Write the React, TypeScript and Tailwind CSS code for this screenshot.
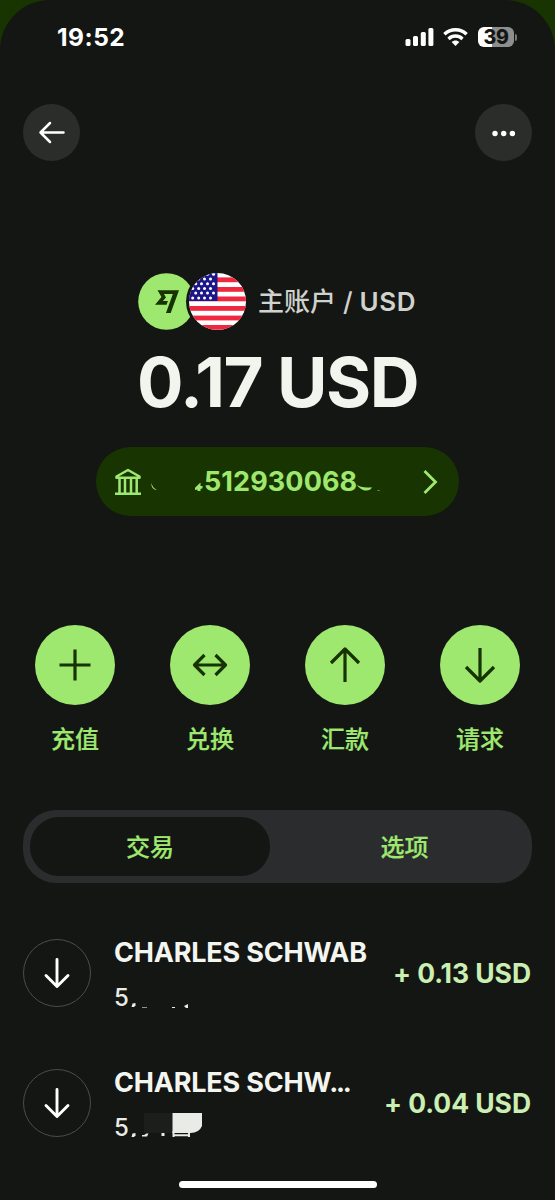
import type React from "react"

interface ActionProps {
    label: string
    children: React.ReactNode
}

interface TransactionProps {
    name: string
    truncated?: boolean
    amount: string
    children: React.ReactNode
}

const starRows = [
    { y: 1.3, xs: [12.5, 18.5, 24.5] },
    { y: 6, xs: [9.7, 15.5, 21.5] },
    { y: 10.7, xs: [6.7, 12.5, 18.5, 24.5] },
    { y: 15.4, xs: [3.7, 9.7, 15.5, 21.5] },
    { y: 20.1, xs: [6.7, 12.5, 18.5, 24.5] },
    { y: 24.9, xs: [3.7, 9.7, 15.5, 21.5] },
]

const stripes = [-5, 4.4, 14, 23.5, 33, 42.6, 52]

const StatusBar = () => (
    <div className="flex h-[74px] shrink-0 items-center justify-between pl-[57px] pr-[38px]">
        <span className="text-[24.5px] font-bold leading-none tracking-[0.5px] text-white">19:52</span>
        <div className="flex items-center">
            <svg width="29" height="18" viewBox="0 0 29 18" fill="#fff">
                <rect x="0.5" y="11" width="5" height="7" rx="1.5" />
                <rect x="8" y="8" width="5" height="10" rx="1.5" />
                <rect x="15.8" y="4" width="5" height="14" rx="1.5" />
                <rect x="23.4" y="0" width="5" height="18" rx="1.5" />
            </svg>
            <svg className="ml-[9px]" width="25" height="18" viewBox="0 0 25 18" fill="none" stroke="#fff" strokeWidth="3.4">
                <path d="M1.4 6.2C7.6 0.3 17.4 0.3 23.6 6.2" />
                <path d="M5.5 10.9C9.6 7.1 15.4 7.1 19.5 10.9" />
                <path d="M12.5 18L8.6 14.1C10.8 11.9 14.2 11.9 16.4 14.1Z" fill="#fff" stroke="none" />
            </svg>
            <div className="ml-[10px] flex h-5 w-9 items-center justify-center rounded-[6px] bg-[linear-gradient(90deg,#fff_39%,#8d8e8d_39%)]">
                <span className="pt-px text-[19.5px] font-extrabold leading-none tracking-[-0.3px] text-[#141613]">39</span>
            </div>
            <div className="ml-[1px] h-[7px] w-[2px] rounded-r-full bg-[#777977]" />
        </div>
    </div>
)

const BrandBadge = () => (
    <svg width="57" height="57" viewBox="0 0 57 57">
        <circle cx="28.5" cy="28.5" r="28.3" fill="#9fe870" />
        <path
            transform="translate(17 16.6)"
            d="M6.488 7.469 0 15.05h11.585l1.301-3.576H7.922l3.033-3.507.01-.092L8.993 4.48h8.873l-6.878 18.925h4.706L24 .595H2.543l3.945 6.874Z"
            fill="#163300"
        />
    </svg>
)

const UsFlag = () => (
    <svg width="57" height="57" viewBox="0 0 57 57">
        <clipPath id="flag">
            <circle cx="28.5" cy="28.5" r="28.5" />
        </clipPath>
        <g clipPath="url(#flag)">
            <rect width="57" height="57" fill="#fff" />
            {stripes.map((y) => (
                <rect key={y} y={y} width="57" height="4.8" fill="#f0283f" />
            ))}
            <rect width="28.5" height="28" fill="#1b1788" />
            {starRows.map((row) =>
                row.xs.map((x) => <circle key={`${row.y}-${x}`} cx={x} cy={row.y} r="1.5" fill="#fff" />)
            )}
        </g>
    </svg>
)

const Action: React.FC<ActionProps> = ({ label, children }) => (
    <button className="flex w-20 flex-col items-center">
        <span className="flex size-20 items-center justify-center rounded-full bg-[#9fe870]">
            <svg width="40" height="40" viewBox="0 0 40 40" fill="none" stroke="#163300" strokeWidth="3.2" strokeLinejoin="round">
                {children}
            </svg>
        </span>
        <span className="mt-[19px] text-[24px] font-medium leading-8 text-[#9fe870] [-webkit-text-stroke:0.2px_#9fe870]">{label}</span>
    </button>
)

const Transaction: React.FC<TransactionProps> = ({ name, truncated, amount, children }) => (
    <div className="flex h-[68px] items-start">
        <div className="flex size-[68px] items-center justify-center rounded-full border-[1.5px] border-[#4b4d4a]">
            <svg width="28" height="32" viewBox="0 0 28 32" fill="none" stroke="#fff" strokeWidth="2.9" strokeLinecap="round" strokeLinejoin="round">
                <path d="M14 2.5V29.5M3 18.5L14 29.5L25 18.5" />
            </svg>
        </div>
        <div className="ml-[23px] flex-1">
            <div className="mt-px whitespace-nowrap text-[27px] font-bold leading-[26px] tracking-[-0.2px] text-[#f3f5f1]">
                {name}
                {truncated && <span className="-ml-[2px] tracking-[-2.3px]">...</span>}
            </div>
            <div className="mt-4 flex h-[32px] items-start">
                <span className="text-[24px] font-medium leading-[32px] text-[#e8ebe6]">5</span>
                {children}
            </div>
        </div>
        <div className="mt-[17px] whitespace-nowrap text-[26.5px] font-bold leading-[34px] tracking-[-0.05px] text-[#cbefb2]">{amount}</div>
    </div>
)

export default function App() {
    return (
        <div className="h-[1200px] w-[555px] overflow-hidden bg-[#183400] font-['Inter','Noto_Sans_CJK_SC',sans-serif]">
            <div className="flex h-full flex-col rounded-t-[50px] bg-[#141613]">
                <StatusBar />

                <div className="mt-[30px] flex shrink-0 justify-between px-[23px]">
                    <button className="flex size-[57px] items-center justify-center rounded-full bg-[#2b2d2a]" aria-label="返回">
                        <svg width="28" height="24" viewBox="0 0 28 24" fill="none" stroke="#fff" strokeWidth="2.5" strokeLinecap="round" strokeLinejoin="round">
                            <path d="M25.5 11.5H2.5M12 2L2.5 11.5L12 21" />
                        </svg>
                    </button>
                    <button className="flex size-[57px] items-center justify-center rounded-full bg-[#2b2d2a]" aria-label="更多">
                        <svg width="24" height="8" viewBox="0 0 24 8" fill="#fff">
                            <circle cx="3" cy="4.5" r="2.7" />
                            <circle cx="11.7" cy="4.5" r="2.7" />
                            <circle cx="20.4" cy="4.5" r="2.7" />
                        </svg>
                    </button>
                </div>

                <div className="mt-[109px] flex shrink-0 items-center pl-[138px]">
                    <BrandBadge />
                    <div className="-ml-[9px] rounded-full bg-[#141613] p-[3px]">
                        <UsFlag />
                    </div>
                    <span className="ml-[9px] whitespace-nowrap text-[26px] font-medium text-[#d0d2ce]">
                        主账户 / <span className="font-semibold tracking-[0.6px]">USD</span>
                    </span>
                </div>

                <div className="mt-[8px] shrink-0 whitespace-nowrap text-center text-[69px] font-bold leading-[82px] tracking-[-1.5px] text-[#f1f5ee]">
                    0.17 USD
                </div>

                <button className="ml-[96px] mt-[24px] flex h-[69px] w-[363px] shrink-0 items-center rounded-full bg-[#183400] pl-[18px] pr-[20px] text-[#9fe870]">
                    <svg width="28" height="28" viewBox="0 0 28 28" fill="none" stroke="currentColor" strokeWidth="2.5" strokeLinejoin="round">
                        <path d="M2.5 8.5L14 2L25.5 8.5V9.7H2.5ZM5.5 10V25M11 10V25M17 10V25M22.7 10V25M1 25.7H27" />
                    </svg>
                    <svg className="ml-[8px]" width="54" height="24" viewBox="0 0 54 24" fill="currentColor">
                        <path d="M1.6 13C2 16.5 4 18.5 7 20C3.5 20 0.8 17 1.6 13Z" />
                        <path d="M45 17.8L50.5 12.5V16H52.5V18.3L50.5 19V21H47.5V19.5L45 20Z" />
                    </svg>
                    <span className="text-[27px] font-bold leading-none tracking-[0.1px]">512930068</span>
                    <svg width="24" height="24" viewBox="0 0 24 24" fill="currentColor">
                        <path d="M0 14.8C3 17 7.8 18.2 14.8 17.2C13.5 22 4 22 0 14.8Z" />
                        <rect x="20.5" y="20" width="2" height="1" opacity="0.6" />
                    </svg>
                    <svg className="ml-auto" width="18" height="26" viewBox="0 0 18 26" fill="none" stroke="currentColor" strokeWidth="2.8">
                        <path d="M3.5 2L14.5 13L3.5 24" />
                    </svg>
                </button>

                <div className="mt-[109px] flex shrink-0 justify-between px-[35px]">
                    <Action label="充值">
                        <path d="M20 4.5V35.5M4.5 20H35.5" />
                    </Action>
                    <Action label="兑换">
                        <path d="M4 20H36M14.5 10L4.5 20L14.5 30M25.5 10L35.5 20L25.5 30" />
                    </Action>
                    <Action label="汇款">
                        <path d="M20 37V4M6 18L20 4L34 18" />
                    </Action>
                    <Action label="请求">
                        <path d="M20 3V36M6 22L20 36L34 22" />
                    </Action>
                </div>

                <div className="mx-[23px] mt-[54px] flex h-[73px] shrink-0 rounded-[33px] bg-[#2a2c2d] p-[7px] text-[24px] font-medium text-[#9fe870] [-webkit-text-stroke:0.2px_#9fe870]">
                    <button className="h-[59px] w-[240px] rounded-[29px] bg-[#141613] pt-[2px]">交易</button>
                    <button className="flex-1 pl-[14px] pt-[2px]">选项</button>
                </div>

                <div className="mt-[56px] flex shrink-0 flex-col gap-[61.5px] pl-[23px] pr-[24px]">
                    <Transaction name="CHARLES SCHWAB" amount="+ 0.13 USD">
                        <svg width="80" height="32" viewBox="0 0 80 32" fill="#e8ebe6">
                            <path d="M3.5 21.5L6.5 21V23.5L5 25L2.5 25Z" />
                            <rect x="13" y="25" width="5" height="1" opacity="0.6" />
                            <rect x="43" y="25" width="3" height="1" />
                            <path d="M55 24L59 22V26H57Z" />
                        </svg>
                    </Transaction>
                    <Transaction name="CHARLES SCHW" truncated amount="+ 0.04 USD">
                        <svg width="80" height="32" viewBox="0 0 80 32" fill="#e8ebe6">
                            <rect x="15" y="1" width="28" height="20" fill="#1c1e1b" />
                            <path d="M3.5 21.5L6.5 21V23.5L5 25L2.5 25Z" />
                            <path d="M13 23H15L17.5 21.5H19.5L18 24.5H13Z" />
                            <rect x="32.5" y="21" width="3" height="3" />
                            <path d="M43.5 1H73V14Q70 21 61.5 21H43.5Z" />
                            <path d="M44.5 19V25M60 19V25M45 23.3H60" fill="none" stroke="#e8ebe6" strokeWidth="2" />
                        </svg>
                    </Transaction>
                </div>

                <div className="mx-auto mb-[12px] mt-auto h-[7px] w-[198px] shrink-0 rounded-full bg-white" />
            </div>
        </div>
    )
}
